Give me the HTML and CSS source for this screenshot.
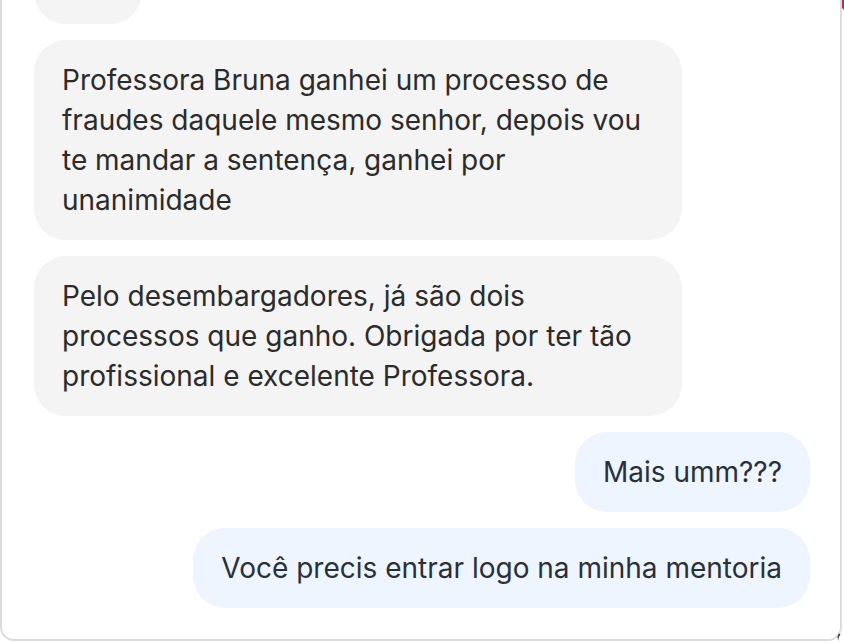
FILE: index.html
```html
<!DOCTYPE html>
<html>
<head>
  <meta name="viewport" content="width=device-width, initial-scale=1.0">
  <title>Mensagens</title>
  <link rel="stylesheet" href="styles.css">
</head>
<body>
  <div class="chat-panel">
    <div class="msg received">Olá!</div>
    <div class="msg received">Professora Bruna ganhei um processo de fraudes daquele mesmo senhor, depois vou te mandar a sentença, ganhei por unanimidade</div>
    <div class="msg received">Pelo desembargadores, já são dois processos que ganho. Obrigada por ter tão profissional e excelente Professora.</div>
    <div class="msg sent">Mais umm???</div>
    <div class="msg sent">Você precis entrar logo na minha mentoria</div>
    <span class="resize-grip"></span>
  </div>
</body>
</html>
```

FILE: styles.css
```css
html, body {
  margin: 0;
  height: 100%;
}
body {
  background: white;
  overflow: hidden;
  display: flex;
  flex-direction: column;
  justify-content: flex-end;
  padding: 0 2px 1px 0;
  box-sizing: border-box;
  position: relative;
  font-family: Inter, "Noto Sans", sans-serif;
}
/* bit of the page behind, peeking at the corner */
body::before {
  content: "";
  position: absolute;
  top: 0;
  right: 0;
  width: 0;
  height: 0;
  border-top: 10px solid #c8245a;
  border-left: 10px solid transparent;
}
.chat-panel {
  position: relative;
  flex-shrink: 0;
  background: white;
  border: 2px solid #dcdcdc;
  border-radius: 14px;
  padding: 0 30px 31px 32px;
  display: flex;
  flex-direction: column;
  gap: 16px;
}
.msg {
  max-width: 648px;
  box-sizing: border-box;
  padding: 20px 28px;
  border-radius: 32px;
  font-size: 28px;
  line-height: 40px;
}
.received {
  align-self: flex-start;
  background: #f4f4f4;
  color: #2b2b2b;
}
.sent {
  align-self: flex-end;
  background: #eef5ff;
  color: #27303c;
}
.resize-grip {
  position: absolute;
  right: -3px;
  bottom: -3px;
  width: 6px;
  height: 6px;
  border-top: 2px solid #444;
  border-radius: 6px 0 0 0;
  transform: rotate(-45deg);
}
```
